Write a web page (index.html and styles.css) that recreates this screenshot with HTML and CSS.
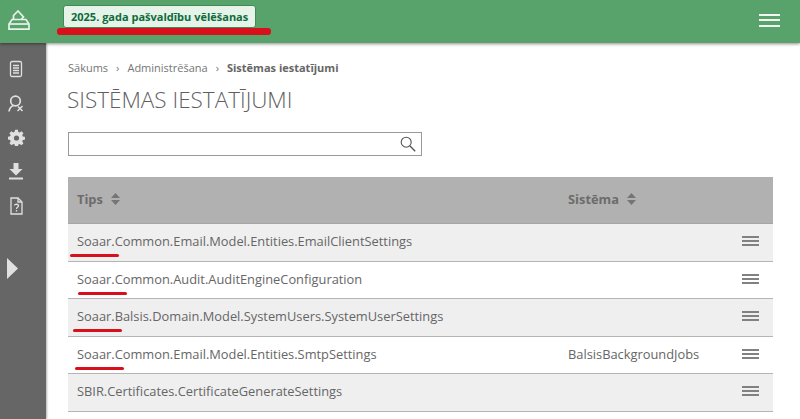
FILE: index.html
```html
<!DOCTYPE html>
<html lang="lv">
<head>
<meta charset="utf-8">
<title>Sistēmas iestatījumi</title>
<link rel="stylesheet" href="styles.css">
</head>
<body>
<header class="topbar">
  <a class="logo"><svg width="22" height="20" viewBox="0 0 22 20" fill="none" stroke="#e8f3ea" stroke-width="1.7"><path d="M5.5 9V5.5L10 1L15.5 7L13.5 9"/><path d="M4 9.5H18L21 14V19.2H1V14Z"/><path d="M1 14H21"/></svg></a>
  <div class="election">2025. gada pašvaldību vēlēšanas<span class="mark mark-election"></span></div>
  <button class="burger" aria-label="Izvēlne"><span></span><span></span><span></span></button>
</header>
<div class="body-row">
  <nav class="sidebar">
    <svg class="ico" width="14" height="18" viewBox="0 0 14 18" fill="none" stroke="#e0e0e0" stroke-width="1.3"><rect x="1.5" y="1.5" width="11" height="15" rx="1.5"/><path d="M4 5.5H10M4 8H10M4 10.5H10M4 13H10"/></svg>
    <svg class="ico" width="17" height="17" viewBox="0 0 17 17" fill="none" stroke="#e0e0e0" stroke-width="1.7"><circle cx="7.5" cy="6" r="4.8"/><path d="M1 16.5C1.5 13 3.5 11 6 10.5"/><path d="M9.5 16L14.5 11M10 11.5L14.5 16" stroke-width="1.5"/></svg>
    <svg class="ico" width="17" height="17" viewBox="0 0 16 16"><path fill="#e0e0e0" fill-rule="evenodd" d="M6.5 0h3l.4 2.2 1.4.6 1.9-1.3 2.1 2.1-1.3 1.9.6 1.4 2.2.4v3l-2.2.4-.6 1.4 1.3 1.9-2.1 2.1-1.9-1.3-1.4.6-.4 2.2h-3l-.4-2.2-1.4-.6-1.9 1.3-2.1-2.1L1.9 12l-.6-1.4-2.2-.4v-3l2.2-.4.6-1.4L.6 3.5l2.1-2.1 1.9 1.3 1.4-.6zM8 5.8a2.7 2.7 0 1 0 0 5.4 2.7 2.7 0 0 0 0-5.4z" transform="translate(0.8 0.8) scale(0.9)"/></svg>
    <svg class="ico" width="14" height="17" viewBox="0 0 14 17"><path fill="#e0e0e0" d="M4.5 0H9.5V6H13.5L7 12.5L.5 6H4.5Z"/><rect x="0" y="14.5" width="14" height="2" fill="#e0e0e0"/></svg>
    <svg class="ico" width="13" height="18" viewBox="0 0 13 18" fill="none" stroke="#e0e0e0" stroke-width="1.3"><path d="M1 1H8L12 5V17H1Z"/><path d="M8 1V5H12"/><path d="M4.5 8.5C4.5 6.8 8.5 6.8 8.5 8.8C8.5 10.3 6.5 10.3 6.5 12"/><path d="M6.5 13V14.5"/></svg>
    <svg class="expand" width="11" height="21" viewBox="0 0 11 21"><path fill="#e0e0e0" d="M0 0L11 10.5L0 21Z"/></svg>
  </nav>
  <main class="content">
    <div class="crumbs"><span>Sākums</span><i>›</i><span>Administrēšana</span><i>›</i><b>Sistēmas iestatījumi</b></div>
    <h1>SISTĒMAS IESTATĪJUMI</h1>
    <div class="search"><svg width="16" height="16" viewBox="0 0 16 16" fill="none" stroke="#555" stroke-width="1.1"><circle cx="6.2" cy="6.2" r="5"/><path d="M10 10L15.2 15.2" stroke-width="1.4"/></svg></div>
    <div class="table">
      <div class="row head">
        <div class="c1">Tips <svg class="sort" width="9" height="12" viewBox="0 0 9 12"><path fill="#757575" d="M4.5 0L9 5H0ZM0 7H9L4.5 12Z"/></svg></div>
        <div class="c2">Sistēma <svg class="sort" width="9" height="12" viewBox="0 0 9 12"><path fill="#757575" d="M4.5 0L9 5H0ZM0 7H9L4.5 12Z"/></svg></div>
        <div class="c3"></div>
      </div>
      <div class="row odd">
        <div class="c1">Soaar.Common.Email.Model.Entities.EmailClientSettings<span class="mark mark-row m1"></span></div>
        <div class="c2"></div>
        <div class="c3"><span class="menu"><span></span><span></span><span></span></span></div>
      </div>
      <div class="row">
        <div class="c1">Soaar.Common.Audit.AuditEngineConfiguration<span class="mark mark-row m2"></span></div>
        <div class="c2"></div>
        <div class="c3"><span class="menu"><span></span><span></span><span></span></span></div>
      </div>
      <div class="row odd">
        <div class="c1">Soaar.Balsis.Domain.Model.SystemUsers.SystemUserSettings<span class="mark mark-row m3"></span></div>
        <div class="c2"></div>
        <div class="c3"><span class="menu"><span></span><span></span><span></span></span></div>
      </div>
      <div class="row">
        <div class="c1">Soaar.Common.Email.Model.Entities.SmtpSettings<span class="mark mark-row m4"></span></div>
        <div class="c2">BalsisBackgroundJobs</div>
        <div class="c3"><span class="menu"><span></span><span></span><span></span></span></div>
      </div>
      <div class="row odd">
        <div class="c1">SBIR.Certificates.CertificateGenerateSettings</div>
        <div class="c2"></div>
        <div class="c3"><span class="menu"><span></span><span></span><span></span></span></div>
      </div>
    </div>
  </main>
</div>
</body>
</html>
```
FILE: styles.css
```css
* { box-sizing: border-box; }
html, body { margin: 0; height: 100%; overflow: hidden; }
body { font-family: "Open Sans", sans-serif; color: #666; background: #fff; display: flex; flex-direction: column; }
.topbar { height: 43px; flex: none; background: #57a36b; display: flex; align-items: center; position: relative; z-index: 2; box-shadow: 0 1px 3px rgba(0,0,0,.45); }
.logo { width: 38px; height: 20px; padding: 0 0 0 8px; flex: none; display: block; margin-top: -4px; box-sizing: content-box; padding-right: 0; }
.election { position: relative; margin: -11px 0 0 17px; height: 23px; padding: 0 7px; background: #e5f3e8; border: 1px solid #3f8a55; border-radius: 3px; color: #0f6b3c; font-size: 11px; font-weight: 700; line-height: 21px; white-space: nowrap; }
.mark { position: absolute; background: #d8101c; border-radius: 3px; }
.mark-election { left: -7px; bottom: -8px; width: 214px; height: 7px; }
.burger { margin-left: auto; margin-right: 20px; margin-top: -3px; width: 21px; height: 13px; padding: 0; border: 0; background: none; display: flex; flex-direction: column; justify-content: space-between; }
.burger span { display: block; height: 2px; background: #f0f8f0; }
.body-row { flex: 1; display: flex; min-height: 0; }
.sidebar { width: 46px; flex: none; background: #666; display: flex; flex-direction: column; align-items: center; padding: 17px 14px 0 0; box-shadow: 1px 0 2px rgba(0,0,0,.3); }
.ico { display: block; margin-bottom: 17px; flex: none; }
.expand { margin: 26px 7px 0 0; flex: none; }
.content { flex: 1; padding: 17px 27px 0 22px; min-width: 0; }
.crumbs { font-size: 11px; line-height: 15px; color: #757575; display: flex; align-items: center; }
.crumbs i { font-style: normal; margin: 0 8px; }
.crumbs b { color: #666; }
h1 { margin: 8px 0 0 -1px; font-size: 22.5px; font-weight: 300; color: #5f5f5f; line-height: 33px; letter-spacing: 0; }
.search { margin: 16px 0 0 0; width: 354px; height: 24px; border: 1px solid #999; background: #fff; display: flex; align-items: center; justify-content: flex-end; padding-right: 5px; }
.table { margin: 21px 0 0 0; width: 705px; }
.row { display: grid; grid-template-columns: 491px 1fr 44px; align-items: center; height: 37.5px; border-bottom: 1.5px solid #b5b5b5; font-size: 12.85px; color: #666; }
.row > div { padding: 0 0 2px 9px; white-space: nowrap; position: relative; }
.row.odd { background: #efefef; }
.row.head { height: 47px; background: #b1b1b1; border-bottom: 1px solid #a5a5a5; font-weight: 700; color: #6c6c6c; }
.sort { margin-left: 5px; vertical-align: -1px; }
.mark-row { top: 22px; width: 49px; height: 3px; }
.m1 { left: 2px; }
.m2 { left: 10px; }
.m3 { left: 5px; }
.m4 { left: 7px; }
.row .c3 { padding: 0 0 2px 13px; display: flex; justify-content: flex-start; }
.menu { width: 17px; height: 10px; display: flex; flex-direction: column; justify-content: space-between; }
.menu span { display: block; height: 2px; background: #818181; }
```
